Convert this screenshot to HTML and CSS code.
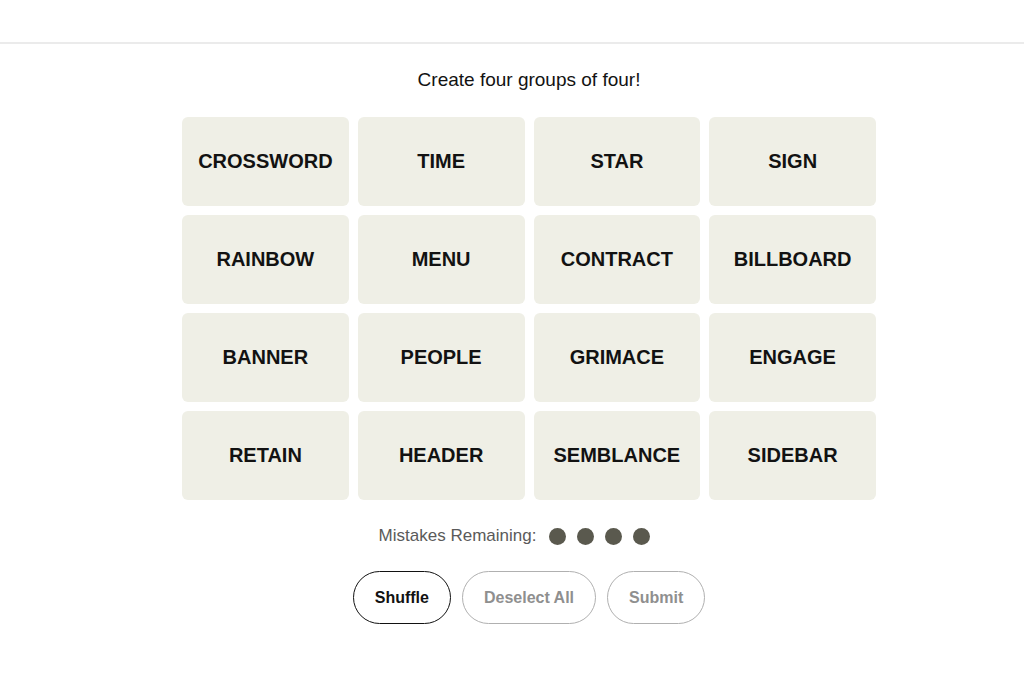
FILE: index.html
```html
<!DOCTYPE html>
<html lang="en">
<head>
  <meta charset="UTF-8">
  <title>Connections</title>
  <link rel="stylesheet" href="styles.css">
</head>
<body>
  <header class="topbar"></header>

  <main class="game">
    <p class="intro">Create four groups of four!</p>

    <div class="board">
      <button class="tile">CROSSWORD</button>
      <button class="tile">TIME</button>
      <button class="tile">STAR</button>
      <button class="tile">SIGN</button>
      <button class="tile">RAINBOW</button>
      <button class="tile">MENU</button>
      <button class="tile">CONTRACT</button>
      <button class="tile">BILLBOARD</button>
      <button class="tile">BANNER</button>
      <button class="tile">PEOPLE</button>
      <button class="tile">GRIMACE</button>
      <button class="tile">ENGAGE</button>
      <button class="tile">RETAIN</button>
      <button class="tile">HEADER</button>
      <button class="tile">SEMBLANCE</button>
      <button class="tile">SIDEBAR</button>
    </div>

    <div class="mistakes">
      <span>Mistakes Remaining:</span>
      <span class="dots"><i></i><i></i><i></i><i></i></span>
    </div>

    <div class="actions">
      <button class="pill active">Shuffle</button>
      <button class="pill">Deselect All</button>
      <button class="pill">Submit</button>
    </div>
  </main>
</body>
</html>
```

FILE: styles.css
```css
body { margin: 0; font-family: "Liberation Sans", Arial, sans-serif; background: #fff; color: #121212; }
.topbar { height: 42px; border-bottom: 2px solid #ebebeb; }
.game { width: 694px; margin: 0 auto; padding-left: 34px; }
.intro { margin: 25px 0 0; text-align: center; font-size: 19px; line-height: 22px; color: #121212; }
.board { display: grid; grid-template-columns: repeat(4, 1fr); gap: 9px 9px; margin-top: 26px; }
.tile { height: 89px; border: none; border-radius: 6px; background: #efefe6; font-family: inherit; font-weight: bold; font-size: 20px; color: #121212; padding: 0; cursor: pointer; }
.mistakes { display: flex; justify-content: center; align-items: center; gap: 13px; margin-top: 26px; padding-right: 29px; font-size: 17px; color: #5a5a5a; height: 20px; }
.dots { display: flex; gap: 11px; }
.dots i { width: 17px; height: 17px; border-radius: 50%; background: #5a594e; display: block; }
.actions { display: flex; justify-content: center; gap: 11px; margin-top: 25px; }
.pill { height: 53px; padding: 0 21px; border: 1px solid #b0b0b0; border-radius: 27px; background: #fff; font-family: inherit; font-weight: bold; font-size: 16px; color: #8f8f8f; cursor: pointer; }
.pill.active { border-color: #121212; color: #121212; }
```
